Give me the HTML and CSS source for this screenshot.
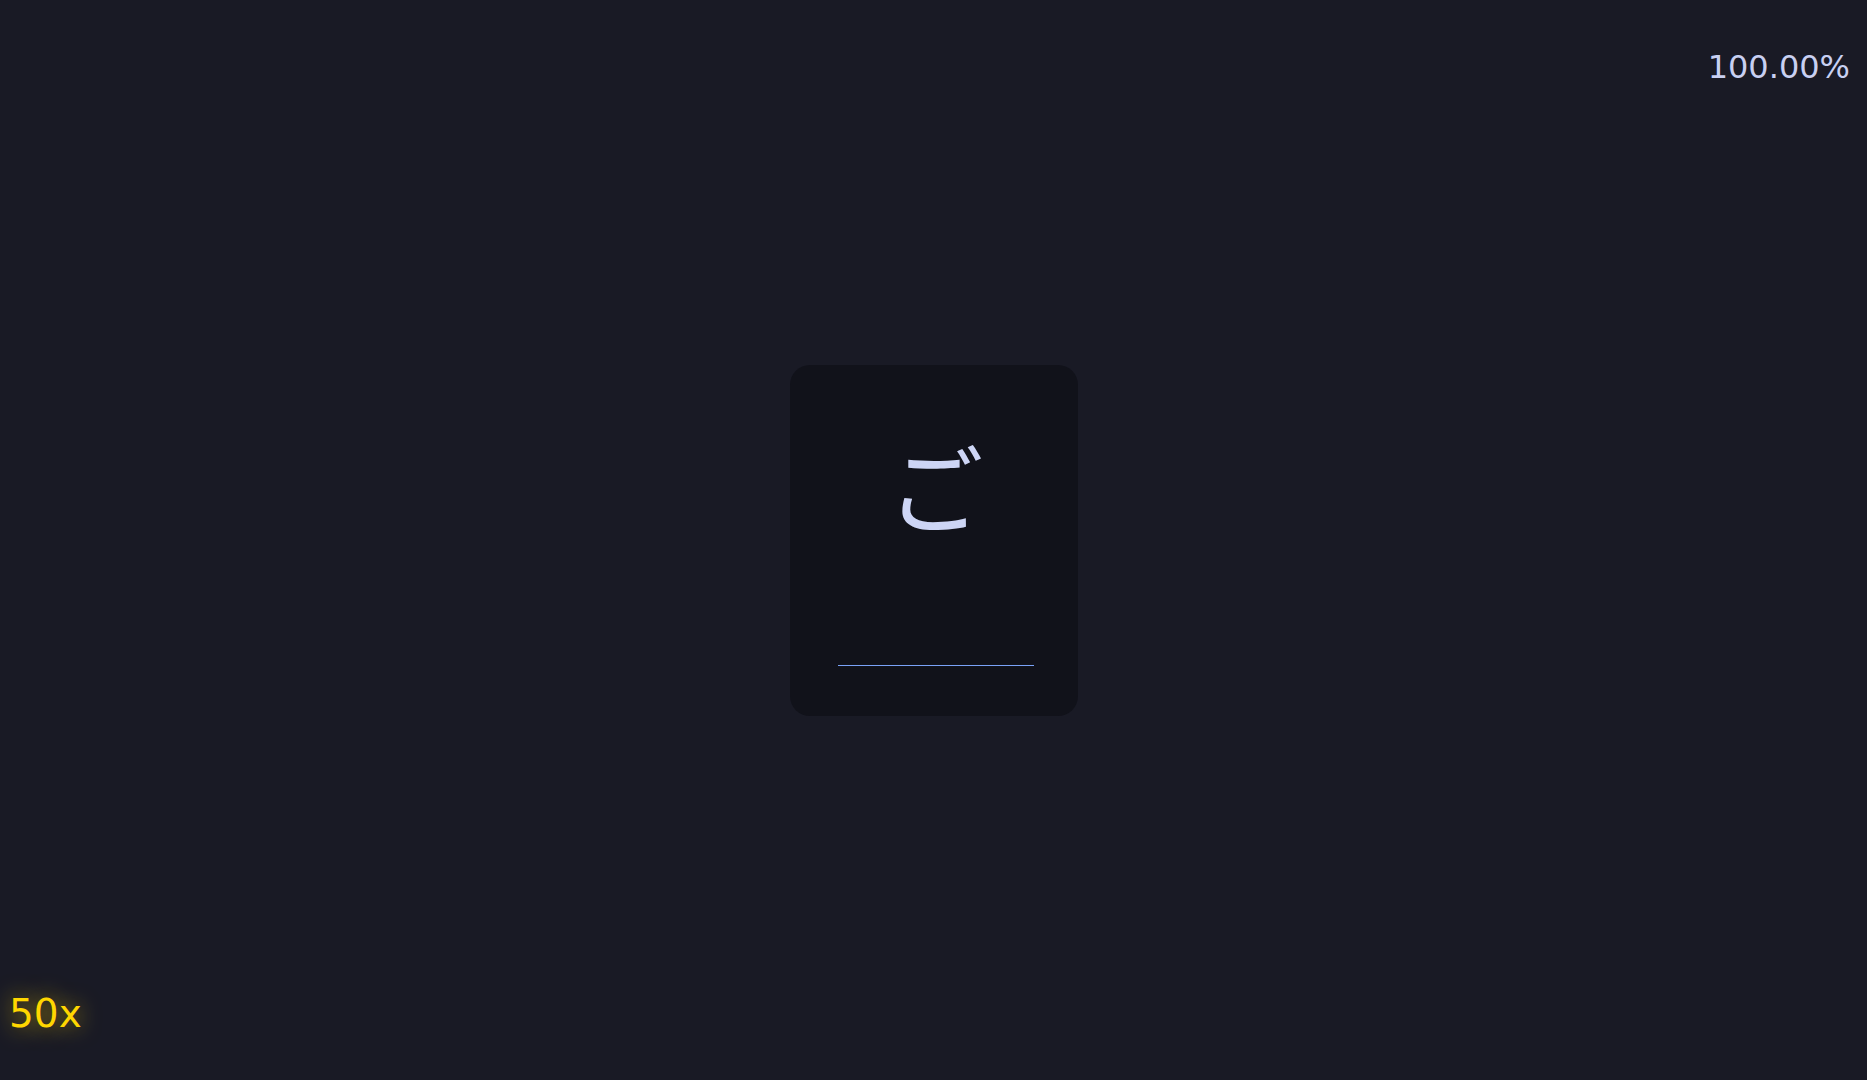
FILE: index.html
```html
<!DOCTYPE html>
<html lang="ja">
<head>
<meta charset="utf-8">
<title>Kana</title>
<link rel="stylesheet" href="styles.css">
</head>
<body>
<div class="accuracy">100.00%</div>
<main class="stage">
  <section class="card">
    <div class="kana">ご</div>
    <input class="answer" type="text" aria-label="answer">
  </section>
</main>
<div class="combo">50x</div>
</body>
</html>
```

FILE: styles.css
```css
html, body {
  margin: 0;
  padding: 0;
  height: 100%;
}
body {
  background: #191a25;
  color: #c8d0f2;
  font-family: "DejaVu Sans", "Noto Sans CJK JP", sans-serif;
  overflow: hidden;
}
.stage {
  height: 100vh;
  display: flex;
  align-items: center;
  justify-content: center;
}
.card {
  box-sizing: border-box;
  width: 288px;
  height: 351px;
  background: #11121a;
  border-radius: 20px;
  display: flex;
  flex-direction: column;
  align-items: center;
  padding: 48px 44px 0 48px;
}
.kana {
  font-family: "Noto Sans CJK JP", sans-serif;
  font-size: 96px;
  line-height: 1.5;
  color: #cdd5f5;
}
.answer {
  margin-top: 88px;
  width: 196px;
  height: 20px;
  padding: 0;
  border: 0;
  border-bottom: 1px solid #7aa2f7;
  border-radius: 0;
  background: transparent;
  outline: none;
  color: #c8d0f2;
  -webkit-appearance: none;
  appearance: none;
}
.accuracy {
  position: absolute;
  top: 48px;
  right: 17px;
  font-size: 32px;
  color: #c8d0f2;
}
.combo {
  position: absolute;
  left: 9px;
  bottom: 44px;
  font-size: 39px;
  color: #ffd700;
  text-shadow: 0 0 22px rgba(255, 215, 0, 0.7);
}
```
